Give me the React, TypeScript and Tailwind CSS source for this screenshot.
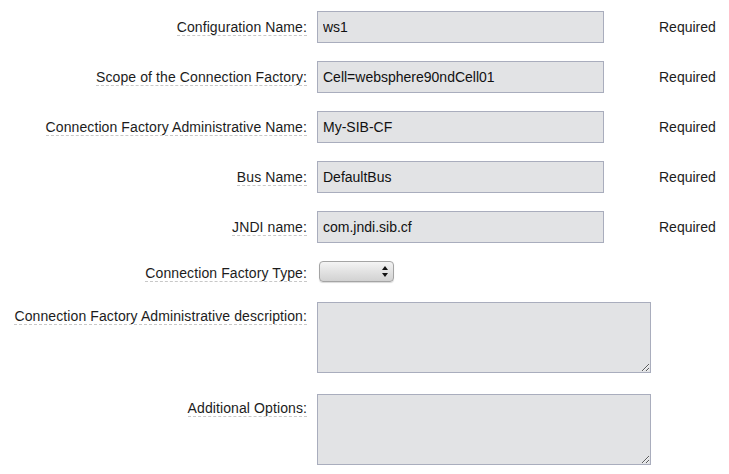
import React from "react";

const font = "font-['Liberation_Sans',Arial,Helvetica,sans-serif]";

function Label({ text }: { text: string }) {
  return (
    <span className="block border-b border-dashed border-[#c8c8c8] leading-[16px] text-[14px] tracking-[0.1px] text-[#1c1c1c]">
      {text}
    </span>
  );
}

function TextRow({ label, value }: { label: string; value: string }) {
  return (
    <div className="flex items-center h-[32px] mb-[18px]">
      <div className="w-[307px] flex justify-end">
        <Label text={label} />
      </div>
      <input
        readOnly
        value={value}
        className={`ml-[10px] w-[287px] h-[32px] border border-[#a9adbd] bg-[#e2e3e5] pl-[5px] text-[14px] text-[#111] outline-none ${font}`}
      />
      <span className="ml-[55px] text-[14px] text-[#1c1c1c]">Required</span>
    </div>
  );
}

function AreaRow({ label, mb }: { label: string; mb: string }) {
  return (
    <div className={`flex items-start ${mb}`}>
      <div className="w-[307px] flex justify-end pt-[6px]">
        <Label text={label} />
      </div>
      <textarea
        readOnly
        className={`ml-[10px] w-[334px] h-[71px] border border-[#a9adbd] bg-[#e2e3e5] text-[14px] outline-none block ${font}`}
      />
    </div>
  );
}

export default function App() {
  return (
    <div className={`min-h-screen bg-white pt-[11px] ${font}`}>
      <TextRow label="Configuration Name:" value="ws1" />
      <TextRow label="Scope of the Connection Factory:" value="Cell=websphere90ndCell01" />
      <TextRow label="Connection Factory Administrative Name:" value="My-SIB-CF" />
      <TextRow label="Bus Name:" value="DefaultBus" />
      <TextRow label="JNDI name:" value="com.jndi.sib.cf" />

      {/* select row */}
      <div className="flex items-start h-[21px] mb-[20px]">
        <div className="w-[307px] flex justify-end pt-[4px]">
          <Label text="Connection Factory Type:" />
        </div>
        <div className="relative ml-[12px] w-[75px] h-[21px]">
          <select className="appearance-none block w-full h-full rounded-[4px] border border-[#a4a4a4] bg-gradient-to-b from-[#f4f4f4] via-[#e2e2e2] to-[#d2d2d2] shadow-[0_1px_1px_rgba(0,0,0,0.15)] outline-none" />
          <svg className="absolute right-[6px] top-[5px]" width="6" height="11" viewBox="0 0 6 11">
            <path d="M3 0 L6 4 L0 4 Z" fill="#111" />
            <path d="M0 7 L6 7 L3 11 Z" fill="#111" />
          </svg>
        </div>
      </div>

      <AreaRow label="Connection Factory Administrative description:" mb="mb-[21px]" />
      <AreaRow label="Additional Options:" mb="mb-0" />
    </div>
  );
}
